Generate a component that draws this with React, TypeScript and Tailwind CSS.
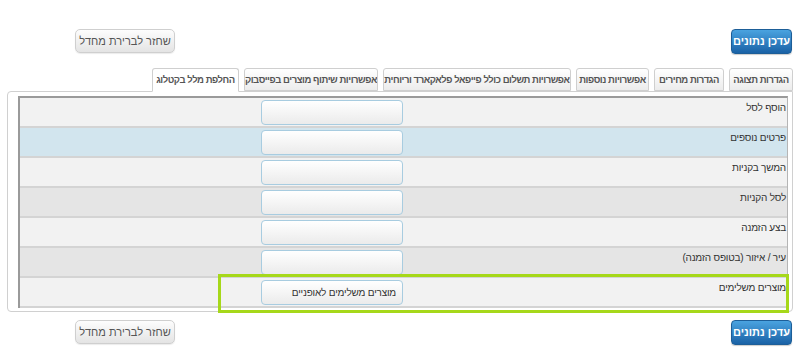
import React from "react";

const tabs = [
  { label: "הגדרות תצוגה", w: "w-[64px]" },
  { label: "הגדרות מחירים", w: "w-[70px]" },
  { label: "אפשרויות נוספות", w: "w-[73px]" },
  { label: "אפשרויות תשלום כולל פייפאל פלאקארד וריוחית", w: "w-[188px]" },
  { label: "אפשרויות שיתוף מוצרים בפייסבוק", w: "w-[134px]" },
  { label: "החלפת מלל בקטלוג", w: "w-[87px]", active: true },
];

const rows = [
  { label: "הוסף לסל", bg: "bg-[#f2f2f2]" },
  { label: "פרטים נוספים", bg: "bg-[#d2e5ee]" },
  { label: "המשך בקניות", bg: "bg-[#f2f2f2]" },
  { label: "לסל הקניות", bg: "bg-[#e5e5e5]" },
  { label: "בצע הזמנה", bg: "bg-[#f2f2f2]" },
  { label: "עיר / איזור (בטופס הזמנה)", bg: "bg-[#e5e5e5]" },
  { label: "מוצרים משלימים", bg: "bg-[#f2f2f2]", value: "מוצרים משלימים לאופניים" },
];

function ResetButton() {
  return (
    <button className="h-[24px] w-[100px] whitespace-nowrap rounded-[5px] border border-[#cfcfcf] bg-gradient-to-b from-[#fdfdfd] to-[#e4e4e4] text-[11px] text-[#555] shadow-[0_1px_1px_rgba(0,0,0,0.08)]">
      שחזר לברירת מחדל
    </button>
  );
}

function UpdateButton() {
  return (
    <button className="h-[25px] w-[61px] whitespace-nowrap rounded-[4px] border border-[#1d5e98] bg-gradient-to-b from-[#4aa3e0] to-[#1a62a6] text-[11px] font-bold text-white shadow-[0_1px_1px_rgba(0,0,0,0.2)]">
      עדכן נתונים
    </button>
  );
}

export default function App() {
  return (
    <div
      dir="rtl"
      className="w-[800px] h-[356px] bg-white overflow-hidden"
      style={{ fontFamily: '"Liberation Sans", Arial, sans-serif' }}
    >
      {/* top actions */}
      <div className="flex items-start justify-between pt-[29px] pr-[8px] pl-[75px]">
        <UpdateButton />
        <ResetButton />
      </div>

      {/* tabs */}
      <div className="mt-[14px] flex gap-[5px] pr-[7px] relative z-10">
        {tabs.map((t) => (
          <div
            key={t.label}
            className={[
              "flex h-[23px] justify-center rounded-t-[3px] border border-[#cfcfcf] text-[9.5px] leading-[21px] font-bold tracking-[-0.45px] text-[#555] whitespace-nowrap overflow-hidden",
              t.w,
              t.active ? "bg-white border-b-white h-[24px]" : "bg-gradient-to-b from-[#ffffff] to-[#ececec]",
            ].join(" ")}
          >
            {t.label}
          </div>
        ))}
      </div>

      {/* panel */}
      <div className="relative mx-[7px] -mt-[1px] rounded-[4px] rounded-tr-none border border-[#d0d0d0] pt-[4px] pb-[3px] pr-[4px] pl-[10px]">
        <div className="border-t-2 border-l-2 border-r border-[#9a9a9a] border-r-[#b5b5b5]">
          {rows.map((r) => (
            <div key={r.label} className={`flex h-[30px] border-b-2 border-[#d4d4d4] ${r.bg}`}>
              <div className="w-[384px] pr-[1px] pt-[2px] text-[10px] tracking-[-0.2px] text-[#333]">{r.label}</div>
              <div className="flex-1 pt-[2px]">
                <div className="h-[25px] w-[142px] rounded-[4px] border border-[#a8cce0] bg-gradient-to-b from-[#ffffff] to-[#ebebeb] pr-[6px] text-[10px] tracking-[-0.2px] leading-[23px] text-[#333]">
                  {r.value ?? ""}
                </div>
              </div>
            </div>
          ))}
        </div>
        {/* highlight */}
        <div className="absolute left-[210px] right-[3px] bottom-[-2px] h-[39px] border-[3px] border-[#a6d81a] pointer-events-none" />
      </div>

      {/* bottom actions */}
      <div className="flex items-start justify-between pt-[8px] pr-[8px] pl-[75px]">
        <UpdateButton />
        <ResetButton />
      </div>
    </div>
  );
}
